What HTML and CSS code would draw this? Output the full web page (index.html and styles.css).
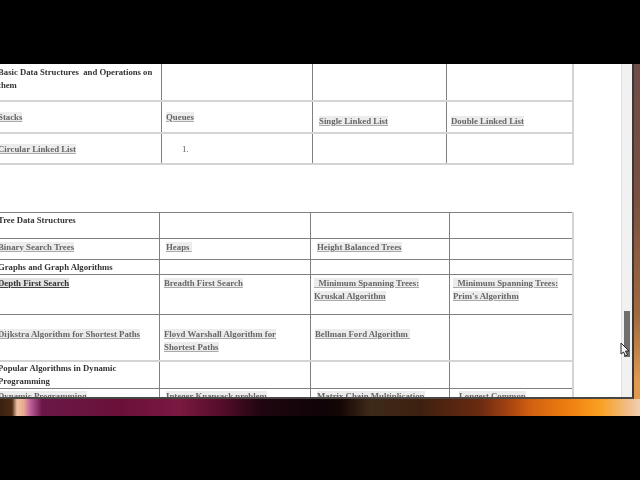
FILE: index.html
```html
<!DOCTYPE html>
<html lang="en">
<head>
    <meta charset="UTF-8">
    <meta name="viewport" content="width=device-width, initial-scale=1.0">
    <title>Data Structures and Algorithms</title>
    <link rel="stylesheet" href="styles.css">
</head>
<body>
    <div class="video">
        <div class="desktop">
            <div class="window">
                <main class="page">
                    <table class="topics first">
                        <colgroup><col class="a1"><col class="a2"><col class="a3"><col class="a4"></colgroup>
                        <tr class="r-head">
                            <td class="heading">Basic Data Structures &nbsp;and Operations on them</td>
                            <td></td><td></td><td></td>
                        </tr>
                        <tr class="r-33 thick">
                            <td><a href="#">Stacks</a></td>
                            <td><a href="#">Queues</a></td>
                            <td class="low indent"><a href="#">Single Linked List</a></td>
                            <td class="low"><a href="#">Double Linked List</a></td>
                        </tr>
                        <tr class="r-31 thick">
                            <td><a href="#">Circular Linked List</a></td>
                            <td class="numbered">1.</td>
                            <td></td><td></td>
                        </tr>
                    </table>

                    <table class="topics second">
                        <colgroup><col class="b1"><col class="b2"><col class="b3"><col class="b4"></colgroup>
                        <tr class="r-27">
                            <td class="heading">Tree Data Structures</td>
                            <td></td><td></td><td></td>
                        </tr>
                        <tr class="r-21">
                            <td><a href="#">Binary Search Trees</a></td>
                            <td class="indent"><a href="#">Heaps&nbsp;</a></td>
                            <td class="indent"><a href="#">Height Balanced Trees</a></td>
                            <td></td>
                        </tr>
                        <tr class="r-15">
                            <td class="heading">Graphs and Graph Algorithms</td>
                            <td></td><td></td><td></td>
                        </tr>
                        <tr class="r-40">
                            <td><a class="dark" href="#">Depth First Search</a></td>
                            <td><a href="#">Breadth First Search</a></td>
                            <td class="tight"><a href="#">&nbsp;&nbsp;Minimum Spanning Trees: Kruskal Algorithm</a></td>
                            <td class="tight"><a href="#">&nbsp;&nbsp;Minimum Spanning Trees: Prim's Algorithm</a></td>
                        </tr>
                        <tr class="r-47">
                            <td class="mid"><a href="#">Dijkstra Algorithm for Shortest Paths</a></td>
                            <td class="mid"><a href="#">Floyd Warshall Algorithm for Shortest Paths</a></td>
                            <td class="mid"><a href="#">Bellman Ford Algorithm&nbsp;</a></td>
                            <td></td>
                        </tr>
                        <tr class="r-28 thick-top">
                            <td class="heading">Popular Algorithms in Dynamic Programming</td>
                            <td></td><td></td><td></td>
                        </tr>
                        <tr class="r-40 r-last">
                            <td><a href="#">Dynamic Programming</a></td>
                            <td class="indent"><a href="#">Integer Knapsack problem</a></td>
                            <td class="indent"><a href="#">Matrix Chain Multiplication</a></td>
                            <td class="indent wide"><a href="#">Longest Common Subsequence</a></td>
                        </tr>
                    </table>
                </main>
                <div class="scrollbar"><div class="thumb"></div></div>
                <svg class="cursor" width="10" height="15" viewBox="0 0 10 15">
                    <path d="M1 1 L1 12 L3.5 10 L5.5 14 L7.5 13 L5.5 9 L9 9 Z" fill="#f4f4f4" stroke="#222" stroke-width="1"/>
                </svg>
            </div>
        </div>
    </div>
</body>
</html>
```

FILE: styles.css
```css
html, body {
    margin: 0;
    padding: 0;
    background-color: #000;
}
.video {
    width: 640px;
    height: 480px;
    padding: 64px 0;
    box-sizing: border-box;
    overflow: hidden;
}
.desktop {
    height: 352px;
    background:
        linear-gradient(180deg, #6e4c48 0, #7a5040 40%, #a06a40 75%, #e09a50 95%) right top / 6px 335px no-repeat,
        linear-gradient(90deg, #3a2010 0, #4a2a14 12px, #f0c0a0 17px, #e8a890 24px, #c060a0 30px, #6a1848 42px, #6a1038 120px, #7a1840 180px, #500c28 225px, #200610 260px, #100408 320px, #140604 340px, #3e2a18 370px, #3e2010 420px, #6a2a10 480px, #a84410 510px, #d06010 530px, #f08010 570px, #f8a020 600px, #f0c090 630px, #f0d0b0 640px);
}
.window {
    position: relative;
    width: 632px;
    height: 333px;
    background-color: #fff;
    border-right: 2px solid #3c3836;
    border-bottom: 2px solid #4a4644;
    overflow: hidden;
}
.page {
    margin-left: -6px;
    margin-top: -7px;
    font-family: "Liberation Serif", serif;
    font-size: 8.8px;
    line-height: 13px;
    font-weight: bold;
    color: #333;
    filter: blur(0.45px);
}
.topics {
    border-collapse: collapse;
    table-layout: fixed;
    width: 578px;
}
.topics td {
    border: 1px solid #808080;
    padding: 2px 4px;
    vertical-align: top;
}
.topics td:first-child { padding-left: 3px; }
.first { margin-bottom: 47px; }
.first tr.thick td { border-bottom: 2px solid #d4d4d4; }
.first tr.r-head td { border-bottom: 2px solid #d4d4d4; }
.first td:last-child, .second td:last-child { border-right: 2px solid #d4d4d4; }

.a1 { width: 167px; }
.a2 { width: 151px; }
.a3 { width: 134px; }
.a4 { width: 126px; }
.b1 { width: 165px; }
.b2 { width: 151px; }
.b3 { width: 139px; }
.b4 { width: 123px; }

.r-head { height: 43px; }
.topics .r-head td { padding-top: 8px; }
.r-33 { height: 32px; }
.topics .r-33 td { padding-top: 9px; }
.r-31 { height: 31px; }
.topics .r-31 td { padding-top: 9px; }
.r-27 { height: 26px; }
.topics .r-27 td { padding-top: 1px; }
.r-21 { height: 21px; }
.topics .r-21 td { padding-top: 2px; }
.r-15 { height: 15px; }
.topics .r-15 td { padding-top: 1px; padding-bottom: 0; }
.r-40 { height: 40px; }
.r-47 { height: 47px; }
.r-28 { height: 26px; }
.topics .r-28 td { padding-top: 0; padding-bottom: 0; }
.topics .r-last td { padding-top: 1px; }
.topics .thick-top td { border-top: 2px solid #d4d4d4; }

.topics .r-33 td.low { padding-top: 13px; }
.topics td.mid { padding-top: 13px; }
.topics td.indent { padding-left: 6px; }
.topics td.tight { padding-left: 3px; }
.topics td.wide { padding-left: 9px; }
.topics td.numbered {
    padding-left: 20px;
    font-weight: normal;
    color: #555;
}
.topics td.heading { color: #333; font-size: 8.7px; }

a {
    color: #666;
    text-decoration: underline;
    text-decoration-color: #aaa;
    background-color: #ececec;
}
a.dark {
    color: #333;
    text-decoration-color: #444;
    background-color: #e2e2e2;
}

.scrollbar {
    position: absolute;
    top: 0;
    right: 0;
    bottom: 0;
    width: 10px;
    background-color: #f1f1f1;
    border-left: 1px solid #e0e0e0;
}
.thumb {
    position: absolute;
    top: 247px;
    left: 2px;
    width: 6px;
    height: 46px;
    background-color: #6f706e;
}
.cursor {
    position: absolute;
    left: 620px;
    top: 278px;
}
```
